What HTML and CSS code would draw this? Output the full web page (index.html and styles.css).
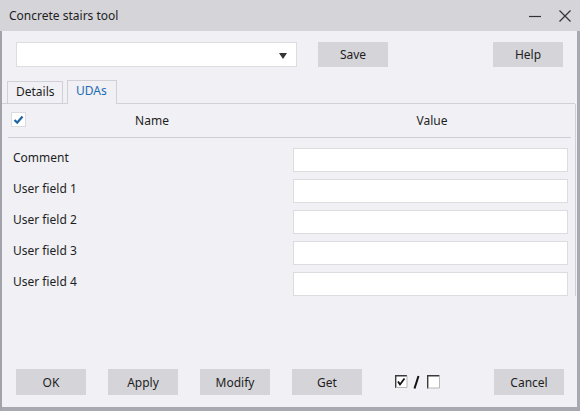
FILE: index.html
```html
<!DOCTYPE html>
<html lang="en">
<head>
  <meta charset="UTF-8">
  <title>Concrete stairs tool</title>
  <link rel="stylesheet" href="styles.css">
</head>
<body>
<div class="window">
  <div class="titlebar">
    <span class="title">Concrete stairs tool</span>
    <svg class="win-btn" width="14" height="14" viewBox="0 0 14 14"><path d="M1 7.5 H13" stroke="#333" stroke-width="1.2"/></svg>
    <svg class="win-btn close" width="14" height="14" viewBox="0 0 14 14"><path d="M1.5 1.5 L12.5 12.5 M12.5 1.5 L1.5 12.5" stroke="#333" stroke-width="1.2"/></svg>
  </div>
  <div class="frame">
    <div class="toolbar">
      <div class="combo"><span class="arrow"></span></div>
      <button class="btn save">Save</button>
      <button class="btn help">Help</button>
    </div>

    <div class="tabs">
      <div class="tab">Details</div>
      <div class="tab active">UDAs</div>
    </div>

    <div class="panel">
      <div class="grid-head">
        <span class="check">
          <svg width="13" height="13" viewBox="0 0 13 13"><path d="M2.5 7 L5.2 9.6 L10.5 3.5" fill="none" stroke="#1c64a8" stroke-width="2.2"/></svg>
        </span>
        <span class="col-name">Name</span>
        <span class="col-value">Value</span>
      </div>
      <div class="rows">
        <div class="row"><label>Comment</label><input type="text"></div>
        <div class="row"><label>User field 1</label><input type="text"></div>
        <div class="row"><label>User field 2</label><input type="text"></div>
        <div class="row"><label>User field 3</label><input type="text"></div>
        <div class="row"><label>User field 4</label><input type="text"></div>
      </div>
    </div>

    <div class="footer">
      <button class="btn">OK</button>
      <button class="btn">Apply</button>
      <button class="btn">Modify</button>
      <button class="btn">Get</button>
      <svg class="toggle" width="46" height="14" viewBox="0 0 46 14">
        <rect x="0.5" y="0.5" width="11" height="12" fill="#fff"/>
        <path d="M0.7 13 V0.7 H12" fill="none" stroke="#3a3a3a" stroke-width="1.4"/>
        <path d="M12 0.7 V12.5 H0.7" fill="none" stroke="#b8b8b8" stroke-width="1"/>
        <path d="M3 6.5 L5 9.5 L9.5 3.5" fill="none" stroke="#111" stroke-width="1.8"/>
        <path d="M19.5 13.5 L23.5 1" stroke="#111" stroke-width="2"/>
        <rect x="32.5" y="0.5" width="12" height="12.5" fill="#fff"/>
        <path d="M32.7 13.5 V0.7 H44.5" fill="none" stroke="#3a3a3a" stroke-width="1.4"/>
        <path d="M44.5 0.7 V13 H32.7" fill="none" stroke="#b8b8b8" stroke-width="1"/>
      </svg>
      <button class="btn cancel">Cancel</button>
    </div>
  </div>
</div>
</body>
</html>
```

FILE: styles.css
```css
body {
  margin: 0;
  font-family: "Noto Sans", "Open Sans", Arial, sans-serif;
  font-size: 12px;
  color: #1e1e1e;
}

.window {
  width: 580px;
  height: 411px;
  display: flex;
  flex-direction: column;
  background: #f0f0f5;
}

.titlebar {
  height: 31px;
  background: #d4d4d9;
  display: flex;
  align-items: center;
  padding: 0 8px 0 9px;
}
.title {
  flex: 1;
}
.win-btn {
  margin-left: 16px;
}

.frame {
  flex: 1;
  display: flex;
  flex-direction: column;
  border-left: 2px solid #a2a2aa;
  border-right: 3px solid #a8a8b0;
  border-bottom: 4px solid #a8a8b0;
}

.btn {
  font: inherit;
  color: #1e1e1e;
  background: #d4d4d9;
  border: none;
  width: 70px;
  height: 25px;
  padding: 0;
}

.toolbar {
  display: flex;
  margin-top: 11px;
  padding: 0 14px;
}
.combo {
  width: 279px;
  height: 23px;
  background: #fff;
  border: 1px solid #dcdce0;
  position: relative;
}
.arrow {
  position: absolute;
  right: 9px;
  top: 10px;
  border-left: 4px solid transparent;
  border-right: 4px solid transparent;
  border-top: 6px solid #333;
}
.save {
  margin-left: 21px;
}
.help {
  margin-left: auto;
}

.tabs {
  display: flex;
  align-items: flex-end;
  gap: 4px;
  margin-top: 13px;
  margin-right: 2px;
  padding-left: 5px;
  height: 23px;
  border-bottom: 1px solid #d0d0d6;
}
.tab {
  height: 21px;
  line-height: 20px;
  padding: 0 8px;
  border: 1px solid #d0d0d6;
  border-bottom: none;
}
.tab:first-child {
  width: 38px;
}
.tab.active {
  height: 23px;
  width: 32px;
  margin-bottom: -1px;
  background: #f0f0f5;
  color: #1f6cb0;
}

.panel {
  border-right: 1px solid #d0d0d6;
  margin-right: 1px;
}

.grid-head {
  display: flex;
  align-items: center;
  height: 33px;
  margin: 0 4px 0 6px;
  padding-left: 3px;
  border-bottom: 1px solid #cfcfd6;
}
.check {
  width: 13px;
  height: 13px;
  background: #fff;
  border: 1px solid #dcdce0;
  margin-top: -2px;
  display: flex;
}
.col-name {
  width: 246px;
  text-align: center;
  margin-left: 3px;
}
.col-value {
  flex: 1;
  text-align: center;
  margin-left: 18px;
}

.rows {
  display: flex;
  flex-direction: column;
  gap: 7px;
  margin-top: 10px;
  padding: 0 7px 0 11px;
}
.row {
  display: flex;
  align-items: center;
  height: 24px;
}
.row label {
  flex: 1;
  margin-top: -5px;
}
.row input {
  width: 273px;
  height: 22px;
  box-sizing: content-box;
  padding: 0;
  border: 1px solid #dcdce0;
  background: #fff;
}

.footer {
  display: flex;
  align-items: center;
  margin-top: auto;
  padding: 0 13px 12px 14px;
}
.footer .btn {
  height: 26px;
  margin-right: 22px;
}
.footer .btn.cancel {
  margin-left: auto;
  margin-right: 0;
}
.toggle {
  margin-left: 11px;
}
```
